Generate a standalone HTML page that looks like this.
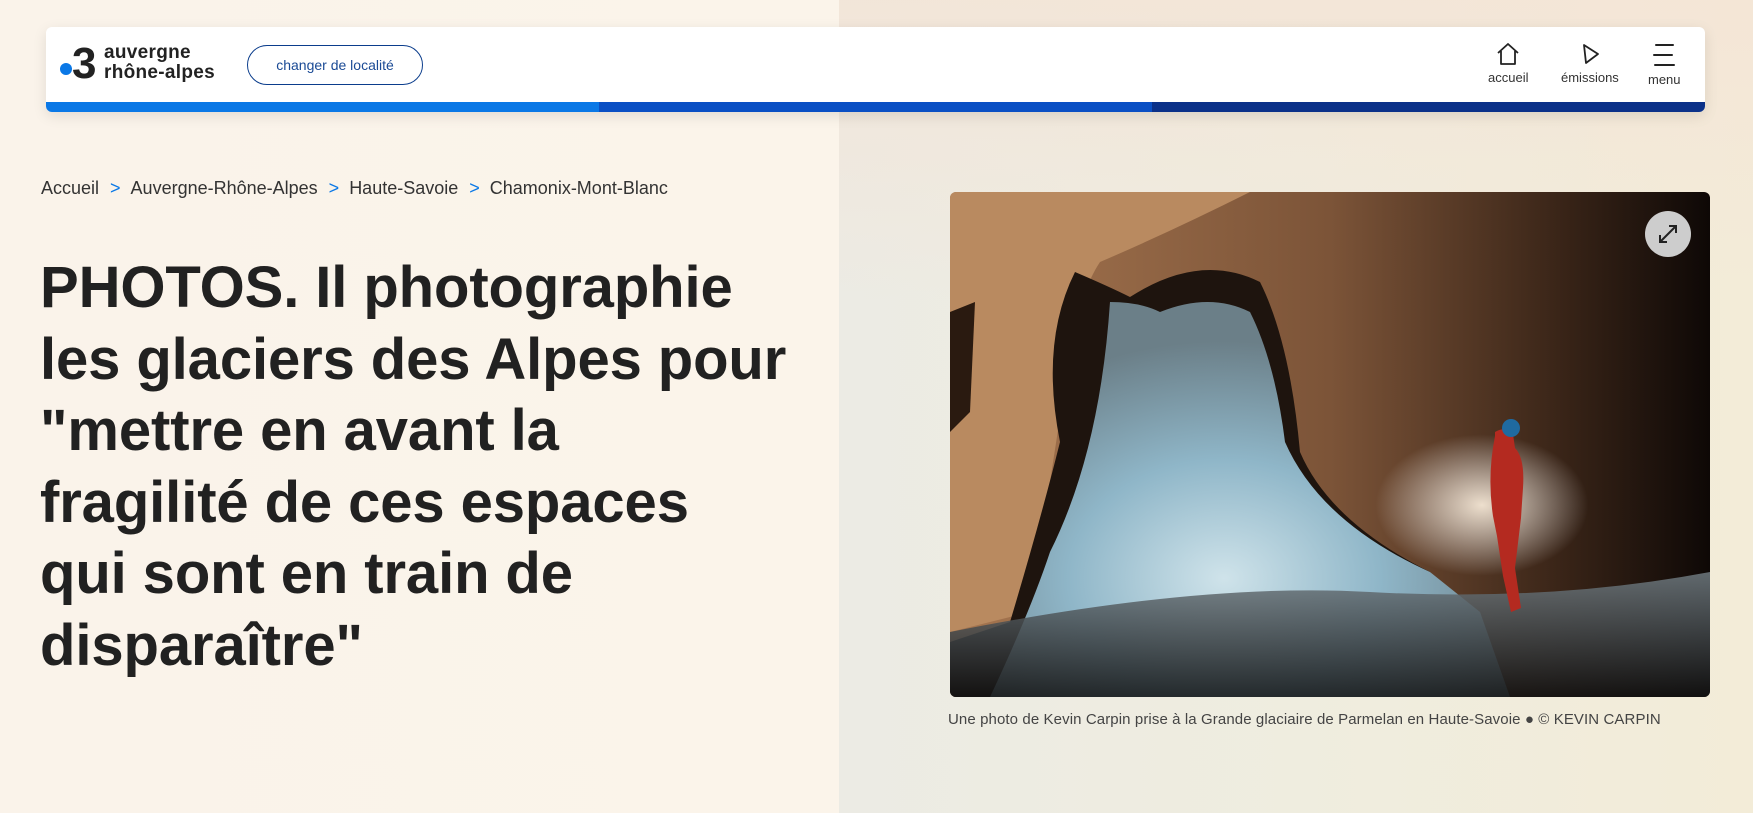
<!DOCTYPE html>
<html><head><meta charset="utf-8"><style>
*{margin:0;padding:0;box-sizing:border-box}
html,body{width:1753px;height:815px;overflow:hidden}
body{font-family:"Liberation Sans",sans-serif;background:linear-gradient(90deg,#faf3ea 0,#fbf4ea 839px,#ecebe4 839px,#efeddf 1300px,#f3ecd8 1753px);position:relative;color:#222}
.rt{position:absolute;left:839px;top:0;width:914px;height:815px;background:linear-gradient(180deg,rgba(244,228,214,.8) 0,rgba(240,236,220,0) 300px)}
.hdr{position:absolute;left:46px;top:27px;width:1659px;height:85px;background:#fff;border-radius:6px;box-shadow:0 4px 14px rgba(0,0,0,.1);overflow:hidden}
.bar{position:absolute;left:0;bottom:0;height:10px;width:100%;background:linear-gradient(90deg,#0a78e6 0,#0a78e6 553px,#0a4fc4 553px,#0a4fc4 1106px,#0b3189 1106px)}
.logo{position:absolute;left:14px;top:16px}
.dot{position:absolute;left:0;top:20px;width:12px;height:12px;border-radius:50%;background:#0a78e6}
.three{position:absolute;left:12px;top:-4px;font-weight:bold;font-size:44px;color:#222;letter-spacing:-1px}
.lt{position:absolute;left:44px;top:0;font-size:19px;line-height:20px;font-weight:bold;color:#222;white-space:nowrap;letter-spacing:.3px}
.btn{position:absolute;left:201px;top:18px;width:176px;height:40px;border:1.3px solid #0b3d8c;border-radius:20px;font-size:14px;color:#1a4a95;text-align:center;line-height:38px}
.nav{position:absolute;top:14px;text-align:center;font-size:13px;color:#333}
.nav svg{display:block;margin:0 auto 3px}
.bc{position:absolute;left:41px;top:178px;font-size:18px;color:#333;white-space:nowrap;letter-spacing:0}
.bc span{color:#0a78e6;margin:0 10px 0 11px}
h1{position:absolute;left:40px;top:252px;font-size:58px;line-height:71.5px;font-weight:bold;color:#212121;letter-spacing:-0.1px;white-space:nowrap}
.img{position:absolute;left:950px;top:192px;width:760px;height:505px;border-radius:6px;overflow:hidden}
.cap{position:absolute;left:948px;top:711px;font-size:15px;color:#444;white-space:nowrap;letter-spacing:.1px}
.foot{position:absolute;left:0;top:813px;width:1753px;height:2px;background:#fff}
</style></head><body>
<div class="rt"></div>
<div class="hdr">
 <div class="logo"><div class="dot"></div><div class="three">3</div><div class="lt">auvergne<br>rhône-alpes</div></div>
 <div class="btn">changer de localité</div>
 <div class="nav" style="left:1442px"><svg width="26" height="26" viewBox="0 0 26 26"><path d="M3 12 L13 3 L23 12 M6 10 V23 H20 V10" fill="none" stroke="#222" stroke-width="1.8" stroke-linejoin="round"/></svg>accueil</div>
 <div class="nav" style="left:1515px"><svg width="26" height="26" viewBox="0 0 26 26"><path d="M7 4 L21 13 L9 22 Z" fill="none" stroke="#222" stroke-width="1.8" stroke-linejoin="round"/></svg>émissions</div>
 <div class="nav" style="left:1602px"><svg width="26" height="28" viewBox="0 0 26 28"><path d="M5 4 H22 M3 14 H21 M4 24 H23" stroke="#222" stroke-width="2" stroke-linecap="round"/></svg>menu</div>
 <div class="bar"></div>
</div>
<div class="bc">Accueil<span>&gt;</span>Auvergne-Rhône-Alpes<span>&gt;</span>Haute-Savoie<span>&gt;</span>Chamonix-Mont-Blanc</div>
<h1>PHOTOS. Il photographie<br>les glaciers des Alpes pour<br>"mettre en avant la<br>fragilité de ces espaces<br>qui sont en train de<br>disparaître"</h1>
<div class="img"><svg width="760" height="505" viewBox="0 0 760 505">
<defs>
<linearGradient id="bg" x1="0" x2="1" y1="0" y2="0"><stop offset="0" stop-color="#a67650"/><stop offset=".5" stop-color="#7c5438"/><stop offset=".8" stop-color="#3a2518"/><stop offset="1" stop-color="#0e0806"/></linearGradient>
<radialGradient id="ice" cx=".45" cy=".7" r=".6"><stop offset="0" stop-color="#cfe3ea"/><stop offset=".5" stop-color="#8fb6c8"/><stop offset="1" stop-color="#6b7f88"/></radialGradient>
<radialGradient id="light" cx=".7" cy=".62" r=".14"><stop offset="0" stop-color="#fff2e0" stop-opacity=".9"/><stop offset="1" stop-color="#fff" stop-opacity="0"/></radialGradient>
<linearGradient id="fl" x1="0" x2="0" y1="0" y2="1"><stop offset="0" stop-color="#6f7a80"/><stop offset="1" stop-color="#111"/></linearGradient>
</defs>
<rect width="760" height="505" fill="url(#bg)"/>
<path d="M0 0 H300 Q220 40 150 70 Q130 100 120 160 L80 420 L0 440 Z" fill="#b98a60"/>
<path d="M0 120 L25 110 L20 220 L0 240Z" fill="#2a1a10"/>
<path d="M125 80 Q160 95 180 105 Q250 60 310 90 Q340 150 350 260 Q380 330 480 380 L520 420 L560 505 H0 V450 L60 430 Q90 330 110 250 Q90 150 125 80Z" fill="#1e140e"/>
<path d="M160 110 Q190 110 210 120 Q260 100 300 120 Q325 170 335 250 Q370 330 480 380 L530 420 L560 505 H40 Q80 420 100 360 Q150 260 160 110Z" fill="url(#ice)"/>
<path d="M0 440 Q250 390 420 400 Q600 410 760 380 V505 H0Z" fill="url(#fl)" opacity=".85"/>
<rect width="760" height="505" fill="url(#light)"/>
<path d="M545 240 q10 -6 18 2 l2 14 q10 10 8 40 l-2 30 l-6 50 l6 40 l-10 4 l-8 -36 l-6 -40 l-4 -20 q-6 -40 2 -80 Z" fill="#b42a20"/>
<circle cx="561" cy="236" r="9" fill="#1f6aa0"/>
<circle cx="718" cy="42" r="23" fill="#cdcdcd"/>
<path d="M710 50 L726 34 M719 34 H726 V41 M710 43 V50 H717" fill="none" stroke="#222" stroke-width="2"/>
</svg></div>
<div class="cap">Une photo de Kevin Carpin prise à la Grande glaciaire de Parmelan en Haute-Savoie ● © KEVIN CARPIN</div>
<div class="foot"></div>
</body></html>
